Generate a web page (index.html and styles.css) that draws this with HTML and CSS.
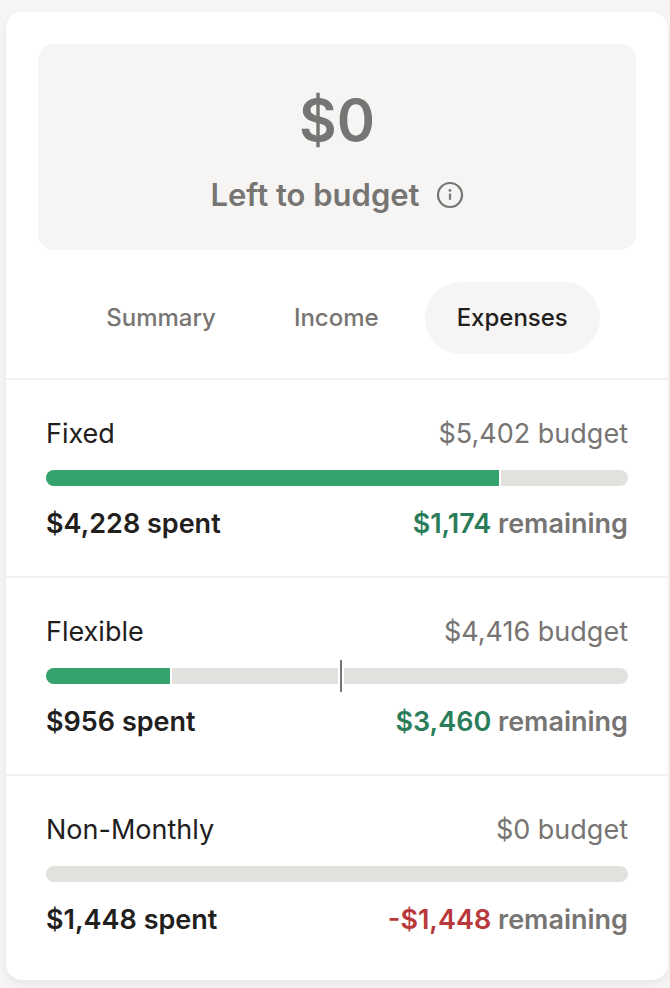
FILE: index.html
```
<!DOCTYPE html>
<html lang="en">
<head>
  <meta charset="UTF-8">
  <meta name="viewport" content="width=device-width, initial-scale=1.0">
  <title>Budget</title>
  <link rel="stylesheet" href="styles.css">
</head>
<body>

  <main class="card">
    <div class="hero">
      <div class="hero-amount">$0</div>
      <div class="hero-label">
        <span>Left to budget</span>
        <button class="info-btn" type="button" aria-label="About left to budget">
          <svg width="28" height="28" viewBox="0 0 28 28" fill="none" aria-hidden="true">
            <circle cx="14" cy="14" r="12" stroke="currentColor" stroke-width="2.2"/>
            <path d="M14 12.6v6.2" stroke="currentColor" stroke-width="2.2"/>
            <circle cx="14" cy="9.4" r="1.4" fill="currentColor"/>
          </svg>
        </button>
      </div>
    </div>

    <div class="tabs" role="tablist">
      <button class="tab" type="button" role="tab" aria-selected="false">Summary</button>
      <button class="tab" type="button" role="tab" aria-selected="false">Income</button>
      <button class="tab active" type="button" role="tab" aria-selected="true">Expenses</button>
    </div>

    <section class="group">
      <div class="row">
        <span>Fixed</span>
        <span class="budget">$5,402 budget</span>
      </div>
      <div class="bar">
        <div class="fill" style="width: 78.2%"></div>
      </div>
      <div class="row totals">
        <span>$4,228 spent</span>
        <span class="remaining"><span class="positive">$1,174</span> remaining</span>
      </div>
    </section>

    <section class="group">
      <div class="row">
        <span>Flexible</span>
        <span class="budget">$4,416 budget</span>
      </div>
      <div class="bar">
        <div class="fill" style="width: 21.6%"></div>
        <div class="today" style="left: 50.7%"></div>
      </div>
      <div class="row totals">
        <span>$956 spent</span>
        <span class="remaining"><span class="positive">$3,460</span> remaining</span>
      </div>
    </section>

    <section class="group">
      <div class="row">
        <span>Non-Monthly</span>
        <span class="budget">$0 budget</span>
      </div>
      <div class="bar"></div>
      <div class="row totals">
        <span>$1,448 spent</span>
        <span class="remaining"><span class="negative">-$1,448</span> remaining</span>
      </div>
    </section>
  </main>

</body>
</html>
```
FILE: styles.css
```
:root {
  --bg: #f6f5f3;
  --text: #22201d;
  --muted: #777573;
  --track: #e2e1de;
  --green: #34a36e;
  --green-text: #2b7d5a;
  --red-text: #b9383b;
}

* {
  box-sizing: border-box;
}

body {
  margin: 0;
  padding: 12px 2px 8px 6px;
  background: var(--bg);
  color: var(--text);
  font-family: Inter, "Liberation Sans", sans-serif;
  font-size: 27px;
  line-height: 38px;
}

button {
  border: none;
  background: none;
  color: inherit;
  font: inherit;
  cursor: pointer;
}

/* flow-root keeps the hero margin inside the card */
.card {
  display: flow-root;
  padding-bottom: 8px;
  background: #fff;
  border-radius: 16px;
  box-shadow: 0 4px 8px rgba(0, 0, 0, 0.06);
}

.hero {
  margin: 32px 32px 0;
  padding: 38px 16px 34px;
  background: var(--bg);
  border-radius: 16px;
  color: var(--muted);
  text-align: center;
}

.hero-amount {
  font-size: 58px;
  font-weight: 600;
  line-height: 76px;
  margin-bottom: 16px;
}

.hero-label {
  display: flex;
  justify-content: center;
  align-items: center;
  gap: 16px;
  font-size: 31px;
  font-weight: 600;
  line-height: 42px;
}

.info-btn {
  display: flex;
  padding: 0;
}

.tabs {
  display: flex;
  justify-content: center;
  gap: 14px;
  padding: 32px 16px 24px;
}

.tab {
  padding: 18px 32px;
  border-radius: 36px;
  color: var(--muted);
  font-size: 24px;
  font-weight: 500;
  line-height: 36px;
}

.tab.active {
  background: var(--bg);
  color: var(--text);
}

.group {
  padding: 35px 40px 33px;
  border-top: 2px solid #f3f2f0;
}

.row {
  display: flex;
  justify-content: space-between;
}

.totals {
  font-weight: 600;
}

.budget,
.remaining {
  color: var(--muted);
}

.positive {
  color: var(--green-text);
}

.negative {
  color: var(--red-text);
}

.bar {
  position: relative;
  height: 16px;
  margin: 17px 0 19px;
  background: var(--track);
  border-radius: 8px;
}

.fill {
  height: 100%;
  background: var(--green);
  border-right: 2px solid #fff;
  border-radius: 8px 0 0 8px;
}

.today {
  position: absolute;
  top: -8px;
  width: 6px;
  height: 32px;
  margin-left: -3px;
  background: #777573;
  border: solid #fff;
  border-width: 0 2px;
}
```
